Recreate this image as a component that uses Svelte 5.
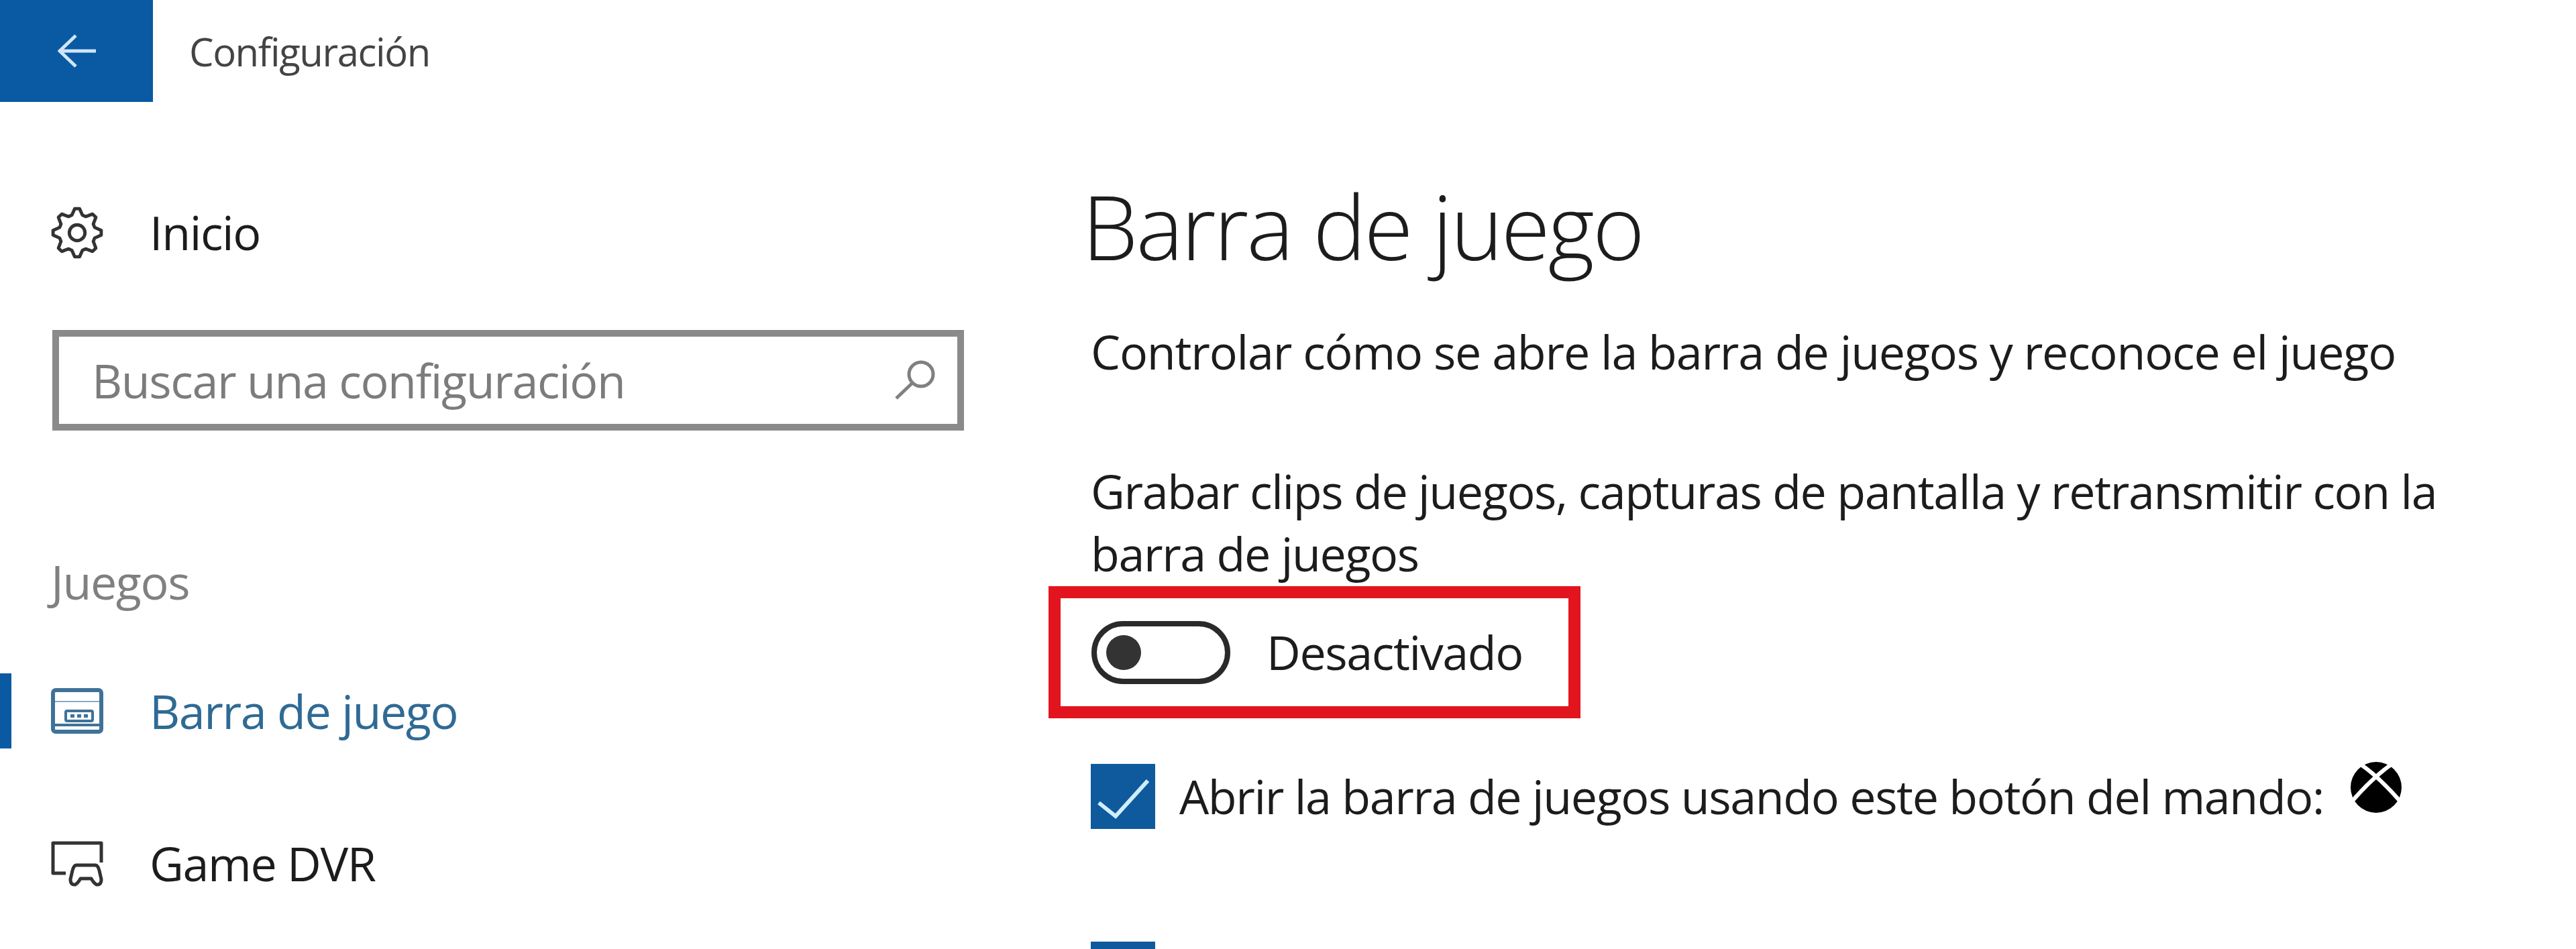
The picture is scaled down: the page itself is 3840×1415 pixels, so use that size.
<script>
  // lobed outline for the settings gear
  function gearPath(cx, cy, outer, inner, teeth) {
    const steps = teeth * 4;
    let d = '';
    for (let i = 0; i < steps; i++) {
      const a = (i / steps) * Math.PI * 2 - Math.PI / 2 - Math.PI / steps;
      const r = i % 4 < 2 ? outer : inner;
      const x = (cx + r * Math.cos(a)).toFixed(1);
      const y = (cy + r * Math.sin(a)).toFixed(1);
      d += (i === 0 ? 'M' : 'L') + x + ' ' + y + ' ';
    }
    return d + 'Z';
  }
  const gear = gearPath(40, 40, 37, 28, 8);
</script>

<div class="page">
  <header class="top">
    <button class="back" aria-label="Volver">
      <svg width="57" height="50" viewBox="0 0 57 50" fill="none" stroke="#cfe6f8" stroke-width="5">
        <path d="M27 2 L3 25 L27 48 M3 25 H57" />
      </svg>
    </button>
    <span class="app-title">Configuración</span>
  </header>

  <div class="columns">
    <nav class="side">
      <div class="nav-item home">
        <svg class="icon" width="80" height="80" viewBox="0 0 80 80" fill="none" stroke="#333" stroke-width="5" stroke-linejoin="round">
          <path d={gear} />
          <circle cx="40" cy="40" r="12" />
        </svg>
        <span>Inicio</span>
      </div>

      <div class="search">
        <span>Buscar una configuración</span>
        <svg width="64" height="60" viewBox="0 0 64 60" fill="none" stroke="#808080" stroke-width="5">
          <circle cx="40" cy="21" r="18" />
          <path d="M27 34 L3 57" />
        </svg>
      </div>

      <div class="group">Juegos</div>

      <div class="nav-item active">
        <svg class="icon" width="78" height="68" viewBox="0 0 78 68" fill="none" stroke="#3f7299" stroke-width="6">
          <rect x="3" y="3" width="72" height="62" rx="4" />
          <path d="M3 20 H75" stroke-width="2" opacity="0.6" />
          <path d="M3 55 H75" stroke-width="4" />
          <rect x="22" y="34" width="40" height="15" rx="2" stroke-width="4" />
          <path d="M29 41.500 H55" stroke-width="5" stroke-dasharray="6 4" />
        </svg>
        <span>Barra de juego</span>
      </div>

      <div class="nav-item dvr">
        <svg class="icon" width="78" height="68" viewBox="0 0 78 68" fill="none" stroke="#333" stroke-width="5" stroke-linejoin="round">
          <path d="M22 48 H3 V3 H75 V32" />
          <path d="M38 36 H66 Q70 36 72 44 L75 57 Q75 66 68 65 Q64 63 60 56 H44 Q40 63 36 65 Q29 66 29 57 L32 44 Q34 36 38 36 Z" />
        </svg>
        <span>Game DVR</span>
      </div>
    </nav>

    <main class="content">
      <h1>Barra de juego</h1>
      <p class="lead">Controlar cómo se abre la barra de juegos y reconoce el juego</p>
      <p class="label">Grabar clips de juegos, capturas de pantalla y retransmitir con la barra de juegos</p>

      <div class="toggle-row">
        <span class="toggle"><span class="knob"></span></span>
        <span>Desactivado</span>
      </div>

      <div class="check-row">
        <span class="check">
          <svg width="96" height="97" viewBox="0 0 96 97" fill="none" stroke="#cfeeff" stroke-width="6">
            <path d="M12 58 L37 78 L85 25" />
          </svg>
        </span>
        <span>Abrir la barra de juegos usando este botón del mando:</span>
        <svg class="xbox" width="76" height="76" viewBox="0 0 76 76">
          <circle cx="38" cy="38" r="38" fill="#000" />
          <path d="M14 3 Q42 22 75 60 M62 3 Q34 22 1 60" fill="none" stroke="#fff" stroke-width="6" />
        </svg>
      </div>

      <div class="check-row second">
        <span class="check"></span>
      </div>
    </main>
  </div>
</div>

<style>
  :global(body) {
    margin: 0;
    background: #fff;
  }

  .page {
    width: 3840px;
    height: 1415px;
    overflow: hidden;
    background: #fff;
    color: #1c1c1c;
    font-family: "Open Sans", "Noto Sans", sans-serif;
    font-size: 70px;
    line-height: 93px;
    letter-spacing: -1.4px;
  }

  .top {
    display: flex;
    align-items: center;
    height: 152px;
  }

  .back {
    display: flex;
    align-items: center;
    justify-content: center;
    width: 228px;
    height: 152px;
    padding: 0;
    border: 0;
    background: #0a5aa3;
  }

  .app-title {
    margin-left: 54px;
    font-size: 58px;
    color: #444;
  }

  .columns {
    display: grid;
    grid-template-columns: 1626px 1fr;
  }

  .side {
    display: flex;
    flex-direction: column;
  }

  .nav-item {
    display: flex;
    align-items: center;
    padding-left: 76px;
    position: relative;
  }

  .nav-item .icon {
    width: 78px;
    margin-right: 69px;
    flex: none;
  }

  .home {
    margin-top: 148px;
  }

  .search {
    display: flex;
    align-items: center;
    justify-content: space-between;
    box-sizing: border-box;
    width: 1359px;
    height: 150px;
    margin: 99px 0 0 78px;
    padding: 0 30px 0 49px;
    border: 10px solid #8a8a8a;
    color: #7c7c7c;
  }

  .group {
    margin: 179px 0 0 76px;
    color: #808080;
  }

  .active {
    height: 112px;
    margin-top: 90px;
    color: #2f6a94;
  }

  .active::before {
    content: "";
    position: absolute;
    left: 0;
    top: 0;
    width: 17px;
    height: 112px;
    background: #0a5aa3;
  }

  .dvr {
    margin-top: 125px;
  }

  .content {
    display: flex;
    flex-direction: column;
    align-items: flex-start;
  }

  h1 {
    margin: 95px 0 0 -13px;
    font-size: 133px;
    font-weight: 300;
    line-height: 180px;
    letter-spacing: -3px;
  }

  p {
    margin: 0;
  }

  .lead {
    margin-top: 51px;
    letter-spacing: -1.2px;
  }

  .label {
    margin-top: 115px;
    width: 2030px;
  }

  .toggle-row {
    display: flex;
    align-items: center;
    box-sizing: border-box;
    width: 793px;
    height: 197px;
    margin: 2px 0 0 -63px;
    padding-left: 46px;
    border: 18px solid #e2151f;
    gap: 54px;
  }

  .toggle {
    display: flex;
    align-items: center;
    box-sizing: border-box;
    width: 207px;
    height: 94px;
    padding-left: 14px;
    border: 8px solid #2a2a2a;
    border-radius: 47px;
  }

  .knob {
    width: 52px;
    height: 52px;
    border-radius: 50%;
    background: #333;
  }

  .check-row {
    display: flex;
    align-items: center;
    margin-top: 68px;
    position: relative;
  }

  .check {
    display: block;
    flex: none;
    width: 96px;
    height: 97px;
    margin-right: 36px;
    background: #0f5a9c;
  }

  .check svg {
    display: block;
  }

  .xbox {
    margin: -28px 0 0 40px;
  }

  .second {
    margin-top: 168px;
  }
</style>
